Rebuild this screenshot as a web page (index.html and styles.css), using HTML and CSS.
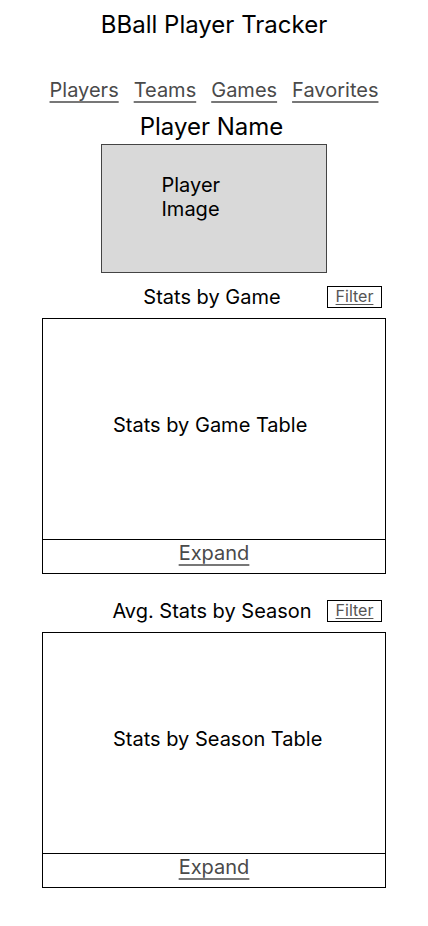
FILE: index.html
```html
<!DOCTYPE html>
<html>
<head>
<meta charset="utf-8">
<link rel="stylesheet" href="styles.css">
</head>
<body>
<div class="page">
  <h1 class="title">BBall Player Tracker</h1>
  <nav class="nav">
    <a href="#">Players</a>
    <a href="#">Teams</a>
    <a href="#">Games</a>
    <a href="#">Favorites</a>
  </nav>
  <h2 class="player-name">Player Name</h2>
  <div class="player-image"><span>Player<br>Image</span></div>

  <section class="section first">
    <div class="section-head">
      <span></span>
      <h3 class="section-title">Stats by Game</h3>
      <a class="filter" href="#">Filter</a>
    </div>
    <div class="table">
      <div class="table-body">Stats by Game Table</div>
      <div class="table-foot"><a href="#">Expand</a></div>
    </div>
  </section>

  <section class="section second">
    <div class="section-head">
      <span></span>
      <h3 class="section-title">Avg. Stats by Season</h3>
      <a class="filter" href="#">Filter</a>
    </div>
    <div class="table">
      <div class="table-body">Stats by Season Table</div>
      <div class="table-foot"><a href="#">Expand</a></div>
    </div>
  </section>
</div>
</body>
</html>
```

FILE: styles.css
```css
* { box-sizing: border-box; }
html, body { margin: 0; padding: 0; background: #fff; }
body {
  font-family: Inter, "Noto Sans", sans-serif;
  color: #000;
}
.page {
  width: 428px;
  display: flex;
  flex-direction: column;
  align-items: center;
  padding-top: 10px;
}
.title {
  margin: 0;
  font-size: 24px;
  line-height: 29px;
  font-weight: 400;
}
.nav {
  display: flex;
  gap: 15px;
  margin-top: 39px;
}
.nav a {
  font-size: 20px;
  line-height: 24px;
  color: #4a4a4a;
  text-decoration: underline;
  text-decoration-color: #777;
  text-underline-offset: 4px;
  text-decoration-thickness: 1.5px;
}
.player-name {
  margin: 10px 5px 0 0;
  font-size: 24px;
  line-height: 29px;
  font-weight: 400;
}
.player-image {
  margin-top: 3px;
  width: 226px;
  height: 129px;
  background: #d9d9d9;
  border: 1px solid #444;
  padding: 28px 0 0 60px;
  font-size: 20px;
  line-height: 24px;
  align-self: center;
  margin-left: -1px;
}
.section {
  width: 344px;
  display: flex;
  flex-direction: column;
}
.section.first { margin-top: 12px; }
.section.second { margin-top: 25px; }
.section-head {
  display: grid;
  grid-template-columns: 1fr auto 1fr;
  align-items: center;
  height: 22px;
  padding-right: 4px;
}
.section-title {
  margin: 0;
  font-size: 20px;
  line-height: 24px;
  font-weight: 400;
}
.filter {
  justify-self: end;
  width: 55px;
  height: 22px;
  border: 1px solid #000;
  font-size: 16px;
  line-height: 18px;
  color: #555;
  text-align: center;
  text-decoration: underline;
  text-underline-offset: 2px;
}
.table {
  margin-top: 11px;
  border: 1px solid #000;
  display: flex;
  flex-direction: column;
}
.table-body {
  height: 220px;
  display: flex;
  align-items: center;
  justify-content: flex-start;
  padding-bottom: 9px;
  padding-left: 70px;
  font-size: 20px;
  line-height: 24px;
}
.table-foot {
  border-top: 1px solid #000;
  height: 34px;
  padding-top: 1px;
  display: flex;
  justify-content: center;
  align-items: flex-start;
}
.table-foot a {
  font-size: 20px;
  line-height: 24px;
  color: #4a4a4a;
  text-decoration: underline;
  text-decoration-color: #777;
  text-underline-offset: 4px;
  text-decoration-thickness: 1.5px;
}
```
